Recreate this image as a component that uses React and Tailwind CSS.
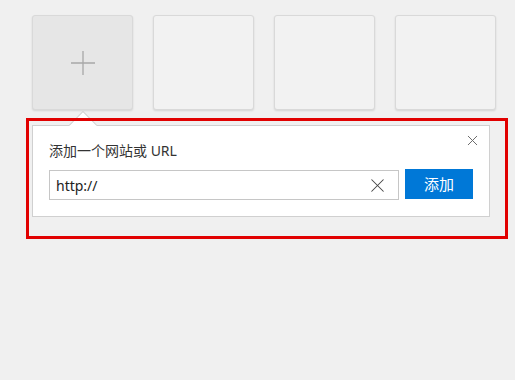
import { X } from 'lucide-react';

const Tile = ({ active, children }) => (
  <div
    className={`flex h-[95px] w-[101px] items-center justify-center rounded-[3px] border border-[#d9d9d9] shadow-[0_1px_2px_rgba(0,0,0,0.12)] ${
      active ? 'bg-[#e6e6e6]' : 'bg-[#f2f2f2]'
    }`}
  >
    {children}
  </div>
);

const App = () => {
  return (
    <div
      className="relative h-[380px] w-[515px] overflow-hidden bg-[#f0f0f0] pl-[32px] pt-[15px]"
      style={{ fontFamily: '"Noto Sans", "Noto Sans CJK SC", sans-serif' }}
    >
      {/* Top sites */}
      <div className="flex gap-[20px]">
        <Tile active>
          <svg width="26" height="26" viewBox="0 0 26 26" className="text-[#a8a8a8]">
            <path d="M13 1v24M1 13h24" stroke="currentColor" strokeWidth="1.3" />
          </svg>
        </Tile>
        <Tile />
        <Tile />
        <Tile />
      </div>

      {/* Add site popover */}
      <div className="relative mt-[15px] h-[92px] w-[458px] border border-[#d0d0d0] bg-white pl-[16px] pt-[15px]">
        <div className="absolute left-[40px] top-[-11px] h-[20px] w-[20px] rotate-45 border-l border-t border-[#d0d0d0] bg-white" />
        <button className="absolute right-[8px] top-[6px] text-[#6b6b6b]">
          <X size={17} strokeWidth={1.4} />
        </button>
        <div className="text-[14px] leading-[20px] text-[#333]">添加一个网站或 URL</div>
        <div className="mt-[9px] flex gap-[6px]">
          <div className="flex h-[30px] w-[350px] items-center border border-[#c6c6c6] pl-[6px] pr-[9px]">
            <span className="flex-1 text-[14px] text-[#222]">http://</span>
            <X size={23} strokeWidth={1.1} className="text-[#444]" />
          </div>
          <button className="mt-[-1px] h-[30px] w-[68px] bg-[#0078d7] text-[15px] text-white">添加</button>
        </div>
      </div>

      {/* Highlight frame */}
      <div className="pointer-events-none absolute left-[26px] top-[118px] h-[121px] w-[482px] border-[3px] border-[#e10000]" />
    </div>
  );
};

export default App;
